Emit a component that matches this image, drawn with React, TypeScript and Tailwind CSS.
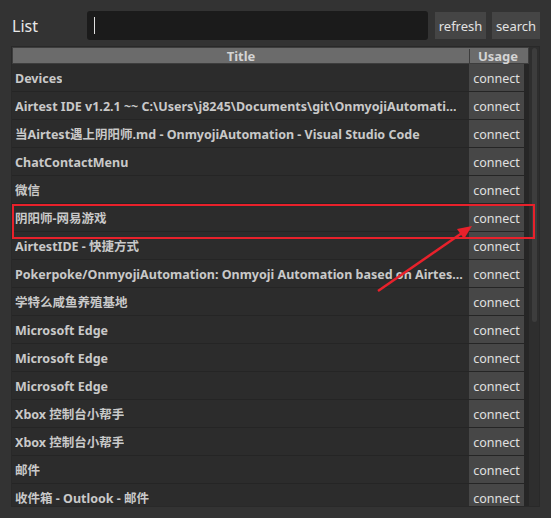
const rows = [
    'Devices',
    'Airtest IDE v1.2.1 ~~ C:\\Users\\j8245\\Documents\\git\\OnmyojiAutomati...',
    '当Airtest遇上阴阳师.md - OnmyojiAutomation - Visual Studio Code',
    'ChatContactMenu',
    '微信',
    '阴阳师-网易游戏',
    'AirtestIDE - 快捷方式',
    'Pokerpoke/OnmyojiAutomation: Onmyoji Automation based on Airtes...',
    '学特么咸鱼养殖基地',
    'Microsoft Edge',
    'Microsoft Edge',
    'Microsoft Edge',
    'Xbox 控制台小帮手',
    'Xbox 控制台小帮手',
    '邮件',
    '收件箱 - Outlook - 邮件',
];

const font = { fontFamily: '"Noto Sans", "Noto Sans CJK SC", sans-serif' };

export default function App() {
    return (
        <div
            className="relative h-[518px] w-[551px] overflow-hidden bg-[#333333]"
            style={font}
        >
            <div className="flex h-[46px] items-start pl-[12px] pt-[11px]">
                <div className="w-[75px] pt-[4px] text-[16px] leading-[22px] text-[#e8e8e8]">
                    List
                </div>
                <div className="flex h-[29px] w-[341px] items-center rounded-[3px] bg-[#1b1b1b] pl-[7px]">
                    <div className="h-[17px] w-px bg-[#e0e0e0]" />
                </div>
                <button className="ml-[7px] mt-px h-[27px] w-[51px] bg-[#454545] pt-[3px] text-[13px] text-[#e2e2e2]">
                    refresh
                </button>
                <button className="ml-[6px] mt-px h-[27px] w-[48px] bg-[#454545] pt-[3px] text-[13px] text-[#e2e2e2]">
                    search
                </button>
            </div>

            <div className="ml-[11px] flex h-[461px] w-[529px] border border-[#292929] bg-[#2b2b2b]">
                <div className="flex w-[517px] flex-col">
                    <div className="flex h-[17px] border border-[#3d3d3d] bg-[#6b6b6b] pt-px text-[13px] font-bold leading-[15px] text-[#d4d4d4]">
                        <div className="w-[457px] border-r border-[#3d3d3d] text-center">Title</div>
                        <div className="w-[56px] text-center">Usage</div>
                    </div>
                    <div className="flex-1 overflow-hidden bg-[#262626]">
                        {rows.map((r, i) => (
                            <div key={i} className="flex h-[28px] w-[512px] border-b border-[#252525]">
                                <div className="flex w-[457px] items-center overflow-hidden bg-[#2c2c2c] pl-[3px] pt-[4px] text-[12.5px] font-bold text-[#c9c9c9]">
                                    <span className="truncate">{r}</span>
                                </div>
                                <div className="flex w-[55px] items-center justify-center bg-[#474747] pt-[4px] text-[12.5px] text-[#e0e0e0]">
                                    connect
                                </div>
                            </div>
                        ))}
                    </div>
                </div>
                <div className="flex w-[10px] justify-center bg-[#2e2e2e] pt-px">
                    <div className="h-[274px] w-[5px] rounded-[3px] bg-[#3d3d3d]" />
                </div>
            </div>

            <div className="absolute left-[12px] top-[204px] h-[35px] w-[523px] border-2 border-[#e8212b]" />
            <svg className="absolute left-0 top-0" width="551" height="518">
                <line x1="378" y1="291" x2="462" y2="233" stroke="#e8212b" strokeWidth="2.5" />
                <polygon points="472,226 457,229 464,239" fill="#e8212b" />
            </svg>
        </div>
    );
}
